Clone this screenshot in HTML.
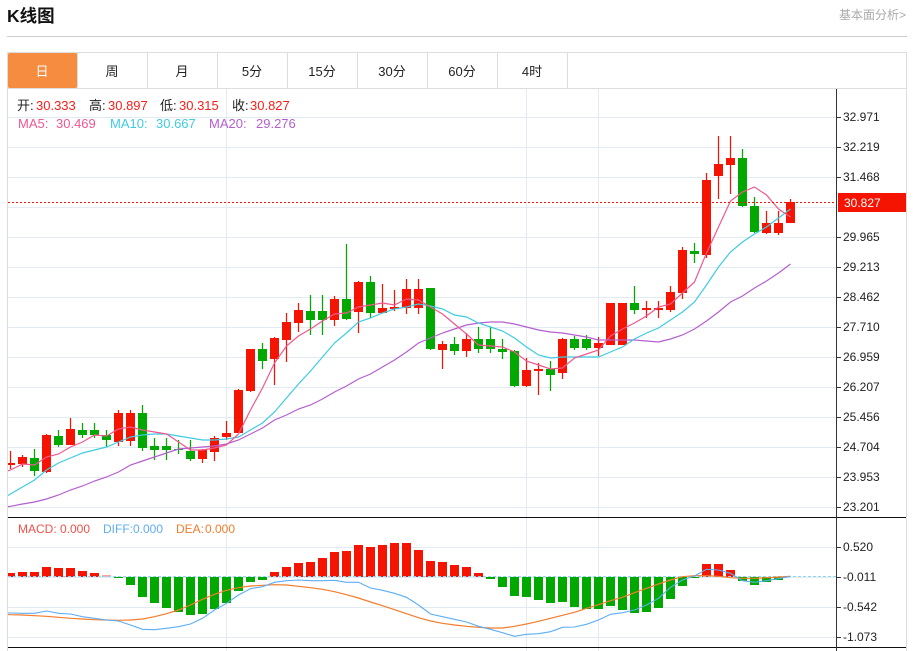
<!DOCTYPE html>
<html lang="zh">
<head>
<meta charset="utf-8">
<title>K线图</title>
<style>
html,body{margin:0;padding:0;background:#fff;width:914px;height:651px;overflow:hidden}
svg{display:block;position:absolute;left:0;top:0}
text{font-family:"Liberation Sans","Noto Sans CJK SC",sans-serif}
</style>
</head>
<body>
<svg width="914" height="651" viewBox="0 0 914 651" xmlns="http://www.w3.org/2000/svg">
<defs><clipPath id="c"><rect x="8" y="89" width="828" height="562"/></clipPath></defs>

<text x="7" y="22" font-size="17.5" font-weight="700" fill="#111">K线图</text>
<text x="839" y="19" font-size="12" fill="#aaa">基本面分析&gt;</text>
<path d="M7 36.5H907" stroke="#ccc" fill="none"/>

<path d="M7.5 52.5H906.5V651M7.5 52.5V651M7.5 88.5H906.5M77.5 52.5V88M147.5 52.5V88M217.5 52.5V88M287.5 52.5V88M357.5 52.5V88M427.5 52.5V88M497.5 52.5V88M567.5 52.5V88" stroke="#ddd" fill="none"/>
<rect x="8" y="53" width="69" height="35" rx="1.5" fill="#f68c40"/>
<g font-size="13" fill="#222" text-anchor="middle">
<text x="42" y="76" fill="#fff">日</text>
<text x="112" y="76">周</text>
<text x="182" y="76">月</text>
<text x="252" y="76">5分</text>
<text x="322" y="76">15分</text>
<text x="392" y="76">30分</text>
<text x="462" y="76">60分</text>
<text x="532" y="76">4时</text>
</g>

<path d="M8 117.5H836M8 147.5H836M8 177.5H836M8 207.5H836M8 237.5H836M8 267.5H836M8 297.5H836M8 327.5H836M8 357.5H836M8 387.5H836M8 417.5H836M8 447.5H836M8 477.5H836M8 507.5H836M8 547.5H836M8 577.5H836M8 607.5H836M8 637.5H836M226.5 89V651M526.5 89V651M598.5 89V651" stroke="#e3ebf2" fill="none"/>

<g clip-path="url(#c)">
<path fill="none" stroke="#f51402" stroke-width="1.25" d="M10.5 451V469M22.5 455V467M46.5 434V473M70.5 418V445M118.5 410V446M130.5 410V446M202.5 449V463M214.5 436V461M226.5 421V440M238.5 389V433M250.5 349V392M274.5 337V385M286.5 313V362M298.5 303V332M334.5 296V326M358.5 281V333M382.5 284V313M394.5 290V311M406.5 279V314M418.5 279V314M442.5 341V369M466.5 333V357M526.5 358V387M538.5 363V395M562.5 338V379M598.5 337V356M646.5 301V318M658.5 301V318M670.5 286V312M682.5 247V299M706.5 173V258M718.5 136V199M730.5 136V194M766.5 211V234M778.5 211V235M790.5 199V223"/>
<path fill="#f51402" d="M6 463h9V465h-9zM18 457h9V464h-9zM42 435h9V472h-9zM66 429h9V445h-9zM114 413h9V442h-9zM126 413h9V441h-9zM198 450h9V459h-9zM210 438h9V452h-9zM222 433h9V437h-9zM234 390h9V433h-9zM246 349h9V391h-9zM270 338h9V359h-9zM282 322h9V340h-9zM294 310h9V323h-9zM330 299h9V320h-9zM354 282h9V312h-9zM378 308h9V313h-9zM390 307h9V309h-9zM402 289h9V308h-9zM414 289h9V308h-9zM438 344h9V350h-9zM462 339h9V351h-9zM522 370h9V386h-9zM534 369h9V371h-9zM558 339h9V373h-9zM594 343h9V348h-9zM606 303h9V345h-9zM618 303h9V345h-9zM642 308h9V310h-9zM654 308h9V310h-9zM666 292h9V310h-9zM678 250h9V293h-9zM702 180h9V255h-9zM714 164h9V176h-9zM726 158h9V165h-9zM762 223h9V233h-9zM774 223h9V233h-9zM786 202h9V223h-9z"/>
<path fill="none" stroke="#00a800" stroke-width="1.25" d="M34.5 449V476M58.5 430V447M82.5 423V438M94.5 423V438M106.5 430V447M142.5 405V451M154.5 438V460M166.5 438V460M178.5 440V454M190.5 440V461M262.5 343V369M310.5 295V335M322.5 295V335M346.5 244V320M370.5 276V318M430.5 288V350M454.5 337V355M478.5 327V353M490.5 327V353M502.5 339V359M514.5 350V387M550.5 361V391M574.5 336V350M586.5 335V350M634.5 286V314M694.5 243V263M742.5 149V207M754.5 197V233"/>
<path fill="#00a800" d="M30 458h9V471h-9zM54 436h9V445h-9zM78 430h9V435h-9zM90 430h9V435h-9zM102 435h9V440h-9zM138 413h9V448h-9zM150 446h9V450h-9zM162 446h9V450h-9zM174 449h9V450h-9zM186 451h9V459h-9zM258 349h9V361h-9zM306 311h9V320h-9zM318 311h9V320h-9zM342 299h9V319h-9zM366 282h9V313h-9zM426 288h9V349h-9zM450 344h9V351h-9zM474 339h9V349h-9zM486 339h9V349h-9zM498 349h9V352h-9zM510 351h9V386h-9zM546 369h9V375h-9zM570 339h9V348h-9zM582 339h9V348h-9zM630 303h9V310h-9zM690 251h9V254h-9zM738 158h9V206h-9zM750 206h9V232h-9z"/>

<polyline fill="none" stroke="#b55fd0" stroke-width="1.2" points="7,507 22.5,504 34.5,502 46.5,499 58.5,495 70.5,490 82.5,486 94.5,481 106.5,477 118.5,472 130.5,465 142.5,461 154.5,457 166.5,453 178.5,449 190.5,448 202.5,447 214.5,446 226.5,444 238.5,440 250.5,434 262.5,428 274.5,420 286.5,415 298.5,409 310.5,405 322.5,399 334.5,392 346.5,386 358.5,379 370.5,374 382.5,367 394.5,360 406.5,352 418.5,343 430.5,338 442.5,333 454.5,329 466.5,325 478.5,323 490.5,322 502.5,322 514.5,324 526.5,327 538.5,330 550.5,332 562.5,333 574.5,335 586.5,337 598.5,340 610.5,340 622.5,340 634.5,340 646.5,341 658.5,342 670.5,339 682.5,335 694.5,329 706.5,321 718.5,312 730.5,302 742.5,296 754.5,288 766.5,281 778.5,273 790.5,264"/>
<polyline fill="none" stroke="#3fcbe2" stroke-width="1.2" points="7,496 22.5,487 34.5,480 46.5,470 58.5,463 70.5,458 82.5,453 94.5,450 106.5,447 118.5,442 130.5,437 142.5,435 154.5,434 166.5,434 178.5,436 190.5,438 202.5,440 214.5,440 226.5,439 238.5,437 250.5,430 262.5,423 274.5,412 286.5,398 298.5,384 310.5,371 322.5,357 334.5,343 346.5,333 358.5,322 370.5,318 382.5,313 394.5,309 406.5,307 418.5,304 430.5,306 442.5,309 454.5,315 466.5,317 478.5,323 490.5,327 502.5,331 514.5,338 526.5,347 538.5,355 550.5,358 562.5,357 574.5,357 586.5,357 598.5,357 610.5,352 622.5,347 634.5,339 646.5,333 658.5,328 670.5,320 682.5,312 694.5,302 706.5,285 718.5,267 730.5,252 742.5,242 754.5,234 766.5,227 778.5,218 790.5,209"/>
<polyline fill="none" stroke="#f0588e" stroke-width="1.2" points="7,471 10.5,470 22.5,464 34.5,465 46.5,457 58.5,454 70.5,447 82.5,442 94.5,435 106.5,436 118.5,429 130.5,427 142.5,430 154.5,432 166.5,434 178.5,442 190.5,450 202.5,450 214.5,448 226.5,445 238.5,434 250.5,410 262.5,388 274.5,363 286.5,346 298.5,336 310.5,329 322.5,321 334.5,314 346.5,313 358.5,307 370.5,305 382.5,303 394.5,305 406.5,299 418.5,300 430.5,307 442.5,314 454.5,324 466.5,334 478.5,345 490.5,346 502.5,347 514.5,352 526.5,361 538.5,365 550.5,369 562.5,368 574.5,358 586.5,354 598.5,350 610.5,336 622.5,329 634.5,323 646.5,316 658.5,307 670.5,304 682.5,293 694.5,282 706.5,253 718.5,227 730.5,201 742.5,192 754.5,187 766.5,195 778.5,209 790.5,217"/>

<path fill="#f51402" d="M6 573h9V577h-9zM18 572h9V577h-9zM30 572h9V577h-9zM42 567h9V577h-9zM54 568h9V577h-9zM66 568h9V577h-9zM78 571h9V577h-9zM90 573h9V577h-9zM270 572h9V577h-9zM282 567h9V577h-9zM294 563h9V577h-9zM306 562h9V577h-9zM318 558h9V577h-9zM330 552h9V577h-9zM342 551h9V577h-9zM354 545h9V577h-9zM366 547h9V577h-9zM378 545h9V577h-9zM390 543h9V577h-9zM402 543h9V577h-9zM414 550h9V577h-9zM426 561h9V577h-9zM438 562h9V577h-9zM450 565h9V577h-9zM462 567h9V577h-9zM474 573h9V577h-9zM702 564h9V577h-9zM714 564h9V577h-9zM726 570h9V577h-9z"/>
<rect x="102" y="575" width="9" height="2" fill="#f7a8a0"/>
<path fill="#00a800" d="M114 577h9V578h-9zM126 577h9V585h-9zM138 577h9V597h-9zM150 577h9V603h-9zM162 577h9V608h-9zM174 577h9V612h-9zM186 577h9V615h-9zM198 577h9V614h-9zM210 577h9V609h-9zM222 577h9V603h-9zM234 577h9V591h-9zM246 577h9V582h-9zM258 577h9V580h-9zM486 577h9V579h-9zM498 577h9V587h-9zM510 577h9V596h-9zM522 577h9V597h-9zM534 577h9V600h-9zM546 577h9V603h-9zM558 577h9V602h-9zM570 577h9V607h-9zM582 577h9V609h-9zM594 577h9V609h-9zM606 577h9V606h-9zM618 577h9V610h-9zM630 577h9V613h-9zM642 577h9V612h-9zM654 577h9V608h-9zM666 577h9V599h-9zM678 577h9V586h-9zM690 577h9V578h-9zM738 577h9V581h-9zM750 577h9V585h-9zM762 577h9V582h-9zM774 577h9V580h-9z"/>
<path d="M8 576.5H836" stroke="#8fd6f2" stroke-dasharray="3 2" fill="none"/>

<polyline fill="none" stroke="#f47c2c" stroke-width="1.2" points="7,614.5 10.5,614.7 22.5,615 34.5,615.7 46.5,616.3 58.5,617.3 70.5,618.3 82.5,619 94.5,619.7 106.5,620 118.5,620.3 130.5,620 142.5,619 154.5,616.7 166.5,613.7 178.5,610 190.5,605 202.5,599.3 214.5,594.3 226.5,590.3 238.5,587.7 250.5,586 262.5,585.3 274.5,584.7 286.5,585 298.5,586.3 310.5,587.7 322.5,589.3 334.5,591.7 346.5,594.7 358.5,598 370.5,602 382.5,605.7 394.5,609.7 406.5,613.7 418.5,617.7 430.5,621 442.5,623.3 454.5,625 466.5,626.3 478.5,627.3 490.5,628 502.5,628 514.5,626.3 526.5,624 538.5,621.3 550.5,618.3 562.5,615.3 574.5,612.3 586.5,608.3 598.5,604.7 610.5,600.7 622.5,597.3 634.5,592.7 646.5,588.3 658.5,584 670.5,580 682.5,576.7 694.5,575.7 706.5,575.7 718.5,576.3 730.5,577.7 742.5,578.3 754.5,578.3 766.5,577.7 778.5,577 790.5,576.3"/>
<polyline fill="none" stroke="#5daef5" stroke-width="1.1" points="7,613 10.5,613 22.5,613.3 34.5,613.3 46.5,611 58.5,613.3 70.5,614 82.5,616.7 94.5,618.3 106.5,620 118.5,621 130.5,625 142.5,629.3 154.5,629.7 166.5,628.3 178.5,626.7 190.5,624 202.5,618.3 214.5,610 226.5,603.3 238.5,595 250.5,588.7 262.5,586.7 274.5,582.3 286.5,580.7 298.5,580 310.5,580.7 322.5,580.7 334.5,580.3 346.5,582.3 358.5,582.3 370.5,588 382.5,590.3 394.5,593.3 406.5,597.3 418.5,605 430.5,614 442.5,616.7 454.5,619.3 466.5,622 478.5,626.3 490.5,629.3 502.5,632.7 514.5,636.3 526.5,634.3 538.5,633.7 550.5,631.7 562.5,627.3 574.5,627 586.5,624.3 598.5,620 610.5,614.3 622.5,612.7 634.5,610 646.5,605 658.5,598.3 670.5,587.3 682.5,580 694.5,576 706.5,569.3 718.5,570 730.5,573.3 742.5,580.7 754.5,582.3 766.5,580.7 778.5,578.7 790.5,576.3"/>
<path d="M8 202.5H836" stroke="#f51402" stroke-dasharray="2 2" fill="none"/>
</g>

<path d="M8 517.5H906M8 647.5H906" stroke="#111" fill="none"/>
<path d="M836.5 89V651" stroke="#333" fill="none"/>
<path d="M837 117.5h4M837 147.5h4M837 177.5h4M837 237.5h4M837 267.5h4M837 297.5h4M837 327.5h4M837 357.5h4M837 387.5h4M837 417.5h4M837 447.5h4M837 477.5h4M837 507.5h4M837 547.5h4M837 577.5h4M837 607.5h4M837 637.5h4" stroke="#333" fill="none"/>
<rect x="838" y="193" width="68" height="19" fill="#f51402"/>
<text x="844" y="207" font-size="12" fill="#fff">30.827</text>

<g font-size="12" fill="#222">
<text x="843" y="121">32.971</text>
<text x="843" y="151">32.219</text>
<text x="843" y="181">31.468</text>
<text x="843" y="241">29.965</text>
<text x="843" y="271">29.213</text>
<text x="843" y="301">28.462</text>
<text x="843" y="331">27.710</text>
<text x="843" y="361">26.959</text>
<text x="843" y="391">26.207</text>
<text x="843" y="421">25.456</text>
<text x="843" y="451">24.704</text>
<text x="843" y="481">23.953</text>
<text x="843" y="511">23.201</text>
<text x="843" y="551">0.520</text>
<text x="843" y="581">-0.011</text>
<text x="843" y="611">-0.542</text>
<text x="843" y="641">-1.073</text>
</g>

<g font-size="13">
<text x="17" y="110" fill="#222">开:</text><text x="36" y="110" fill="#f5201a">30.333</text>
<text x="89" y="110" fill="#222">高:</text><text x="108" y="110" fill="#f5201a">30.897</text>
<text x="160" y="110" fill="#222">低:</text><text x="179" y="110" fill="#f5201a">30.315</text>
<text x="232" y="110" fill="#222">收:</text><text x="250" y="110" fill="#f5201a">30.827</text>
<text x="18" y="128" fill="#f0588e">MA5:</text><text x="56" y="128" fill="#f0588e">30.469</text>
<text x="110" y="128" fill="#3fcbe2">MA10:</text><text x="156" y="128" fill="#3fcbe2">30.667</text>
<text x="209" y="128" fill="#b55fd0">MA20:</text><text x="256" y="128" fill="#b55fd0">29.276</text>
</g>
<g font-size="12">
<text x="18" y="533" fill="#f0504a">MACD:</text><text x="60" y="533" fill="#f0504a">0.000</text>
<text x="103" y="533" fill="#5daef5">DIFF:</text><text x="133" y="533" fill="#5daef5">0.000</text>
<text x="176" y="533" fill="#f47c2c">DEA:</text><text x="205" y="533" fill="#f47c2c">0.000</text>
</g>
</svg>
</body>
</html>
